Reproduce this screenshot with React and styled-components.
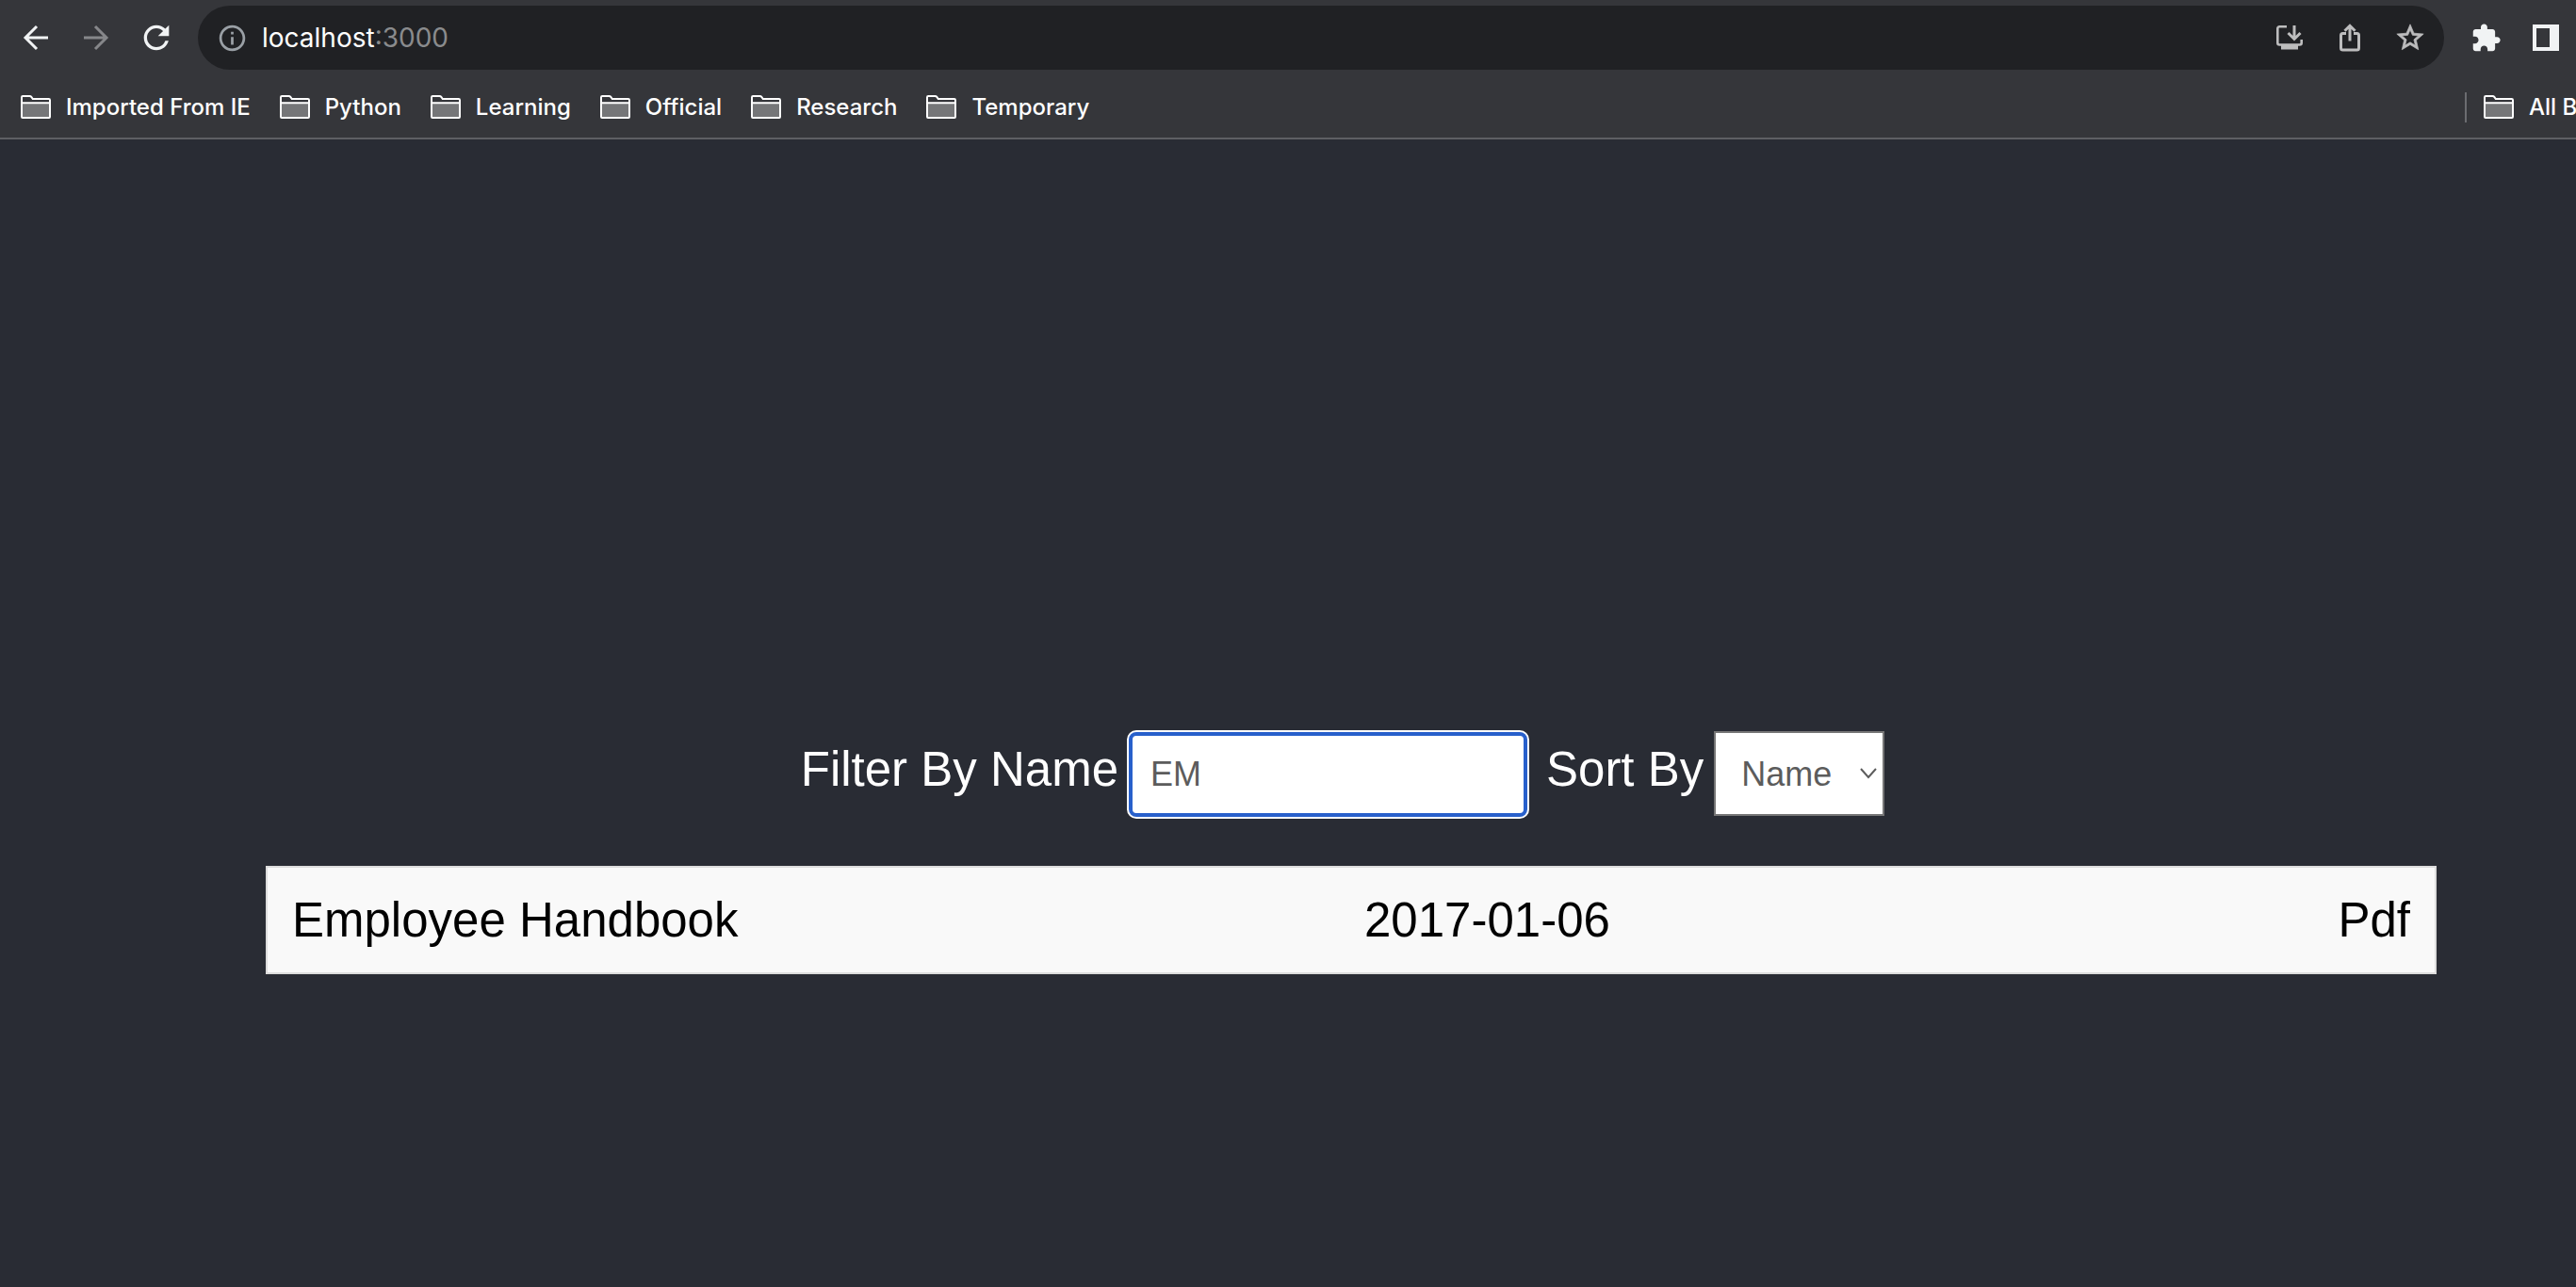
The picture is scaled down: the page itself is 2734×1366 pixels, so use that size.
import React, { useState } from "react";
import styled, { createGlobalStyle } from "styled-components";

const GlobalStyle = createGlobalStyle`
  *, *::before, *::after { box-sizing: border-box; }
  body {
    margin: 0;
    min-height: 100vh;
    background: #292c34;
    font-family: "Liberation Sans", Arial, sans-serif;
    overflow-x: hidden;
  }
`;

const Chrome = styled.header`
  background: #35363a;
  border-bottom: 2px solid #5e5f63;
  padding-top: 6px;
  font-family: Inter, "Noto Sans", sans-serif;
`;

const Toolbar = styled.div`
  display: flex;
  align-items: center;
  gap: 12px;
  padding-left: 6px;
`;

const IconGroup = styled.div`
  display: flex;
  flex: none;
`;

const IconButton = styled.button`
  display: flex;
  align-items: center;
  justify-content: center;
  width: 64px;
  height: 68px;
  padding: 0;
  border: 0;
  background: none;
  color: ${(p) => p.$color || "#f1f3f4"};
`;

const Icon = styled.svg`
  display: block;
  flex: none;
`;

const Omnibox = styled.div`
  display: flex;
  align-items: center;
  flex: 1;
  min-width: 0;
  height: 68px;
  padding: 0 4px 0 20px;
  border-radius: 34px;
  background: #202124;
  color: #9aa0a6;
`;

const Address = styled.label`
  display: flex;
  align-items: center;
  flex: 1;
  min-width: 0;
  margin-left: 15px;
  font-size: 28px;
  line-height: 34px;
  color: #8a8b8d;
`;

const AddressInput = styled.input`
  field-sizing: content;
  padding: 0;
  border: 0;
  outline: 0;
  background: none;
  color: #fff;
  font: inherit;
`;

const Bookmarks = styled.nav`
  display: flex;
  align-items: center;
  justify-content: space-between;
  height: 64px;
  margin-top: 8px;
  padding-left: 22px;
  overflow: hidden;
`;

const BookmarkList = styled.div`
  display: flex;
  gap: 31px;
`;

const Bookmark = styled.a`
  display: flex;
  align-items: center;
  gap: 16px;
  color: #fff;
  font-size: 24px;
  font-weight: 500;
  line-height: 32px;
  white-space: nowrap;
  text-decoration: none;
`;

const AllBookmarks = styled.div`
  flex: none;
  width: 118px;
  padding-left: 18px;
  border-left: 2px solid #6b6c70;
`;

const Page = styled.main`
  display: flex;
  flex-direction: column;
  gap: 52px;
  padding: 628px 148px 0 282px;
`;

const Filters = styled.form`
  display: flex;
  align-items: baseline;
  justify-content: center;
  gap: 20px;
  padding-right: 18px;
`;

const Field = styled.div`
  display: flex;
  align-items: baseline;
  gap: 11px;
`;

const FieldLabel = styled.label`
  color: #fff;
  font-size: 51px;
  line-height: 59px;
  white-space: nowrap;
`;

const TextInput = styled.input`
  width: 423px;
  height: 90px;
  padding: 0 19px;
  border: 4px solid #2860cb;
  border-radius: 8px;
  outline: 0;
  box-shadow: 0 0 0 2px #fff;
  background: #fff;
  color: #5c5c5c;
  font-family: inherit;
  font-size: 36px;
`;

const SelectBox = styled.div`
  position: relative;
`;

const Select = styled.select`
  appearance: none;
  width: 181px;
  height: 90px;
  padding: 0 27px;
  border: 2px solid #767676;
  border-radius: 0;
  background: #fff;
  color: #5c5c5c;
  font-family: inherit;
  font-size: 36px;
`;

const Chevron = styled(Icon)`
  position: absolute;
  right: 8px;
  top: 50%;
  transform: translateY(-50%);
  pointer-events: none;
`;

const Documents = styled.table`
  width: 100%;
  border: 2px solid #ddd;
  border-collapse: separate;
  border-spacing: 0;
  background: #f9f9f9;
  color: #000;
  font-size: 51px;
  line-height: 59px;
`;

const Cell = styled.td`
  width: ${(p) => p.$width || "auto"};
  padding: 26px ${(p) => (p.$align === "right" ? "26px" : "0")} 26px
    ${(p) => p.$indent || "0"};
  text-align: ${(p) => p.$align || "left"};
`;

const FolderIcon = () => (
  <Icon width="32" height="26" viewBox="0 0 32 26" fill="none" aria-hidden="true">
    <path d="M2 8h28v16H2z" fill="#757678" />
    <path
      d="M1 2.2Q1 1 2.2 1H9.5Q10.6 1 11.3 1.9L12.8 4H29.8Q31 4 31 5.2V23Q31 24 30 24H2Q1 24 1 23ZM1 8.3H31"
      stroke="#fff"
      strokeWidth="2"
    />
  </Icon>
);

const BackIcon = () => (
  <Icon width="28" height="28" viewBox="0 0 28 28" fill="none" stroke="currentColor" strokeWidth="3">
    <path d="M27 14H3M15 2L3 14l12 12" />
  </Icon>
);

const ForwardIcon = () => (
  <Icon width="28" height="28" viewBox="0 0 28 28" fill="none" stroke="currentColor" strokeWidth="3">
    <path d="M1 14h24M13 2l12 12-12 12" />
  </Icon>
);

const ReloadIcon = () => (
  <Icon width="40" height="40" viewBox="0 0 24 24" fill="currentColor">
    <path d="M17.65 6.35A7.958 7.958 0 0 0 12 4c-4.42 0-7.99 3.58-7.99 8s3.57 8 7.99 8c3.73 0 6.84-2.55 7.73-6h-2.08A5.99 5.99 0 0 1 12 18c-3.31 0-6-2.69-6-6s2.69-6 6-6c1.66 0 3.14.69 4.22 1.78L13 11h7V4l-2.35 2.35z" />
  </Icon>
);

const InfoIcon = () => (
  <Icon width="33" height="33" viewBox="0 0 24 24" fill="currentColor" aria-hidden="true">
    <path d="M11 7h2v2h-2zm0 4h2v6h-2zm1-9C6.48 2 2 6.48 2 12s4.48 10 10 10 10-4.48 10-10S17.52 2 12 2zm0 18c-4.41 0-8-3.59-8-8s3.59-8 8-8 8 3.59 8 8-3.59 8-8 8z" />
  </Icon>
);

const InstallIcon = () => (
  <Icon width="28" height="26" viewBox="0 0 28 26" fill="none" stroke="currentColor" strokeWidth="2.6">
    <path d="M11 1.3H3.3a2 2 0 0 0-2 2V18.5a2 2 0 0 0 2 2H24.7a2 2 0 0 0 2-2V15" />
    <path d="M19 0v14M12.5 8l6.5 6.5L25.5 8" strokeWidth="3" />
    <path d="M5 21h18v4.5H5z" fill="currentColor" stroke="none" />
  </Icon>
);

const ShareIcon = () => (
  <Icon width="22" height="30" viewBox="0 0 22 30" fill="none" stroke="currentColor" strokeWidth="3">
    <path d="M7 10.5H3.5a2 2 0 0 0-2 2V26a2 2 0 0 0 2 2H18.5a2 2 0 0 0 2-2V12.500a2 2 0 0 0-2-2H15" />
    <path d="M11 2.5V18.5M5.5 7.8L11 2.3l5.5 5.5" />
  </Icon>
);

const StarIcon = () => (
  <Icon width="34" height="34" viewBox="0 0 24 24" fill="currentColor" stroke="currentColor" strokeWidth="0.5">
    <path d="M22 9.24l-7.19-.62L12 2 9.19 8.63 2 9.24l5.46 4.73L5.82 21 12 17.27 18.18 21l-1.63-7.03L22 9.24zM12 15.4l-3.76 2.27 1-4.28-3.32-2.88 4.38-.38L12 6.1l1.71 4.04 4.38.38-3.32 2.88 1 4.28L12 15.4z" />
  </Icon>
);

const ExtensionIcon = () => (
  <Icon width="33" height="33" viewBox="0 0 24 24" fill="currentColor">
    <path d="M20.5 11H19V7c0-1.1-.9-2-2-2h-4V3.5C13 2.12 11.88 1 10.5 1S8 2.12 8 3.5V5H4c-1.1 0-1.99.9-1.99 2v3.8H3.5c1.49 0 2.7 1.21 2.7 2.7s-1.21 2.7-2.7 2.7H2V20c0 1.1.9 2 2 2h3.8v-1.5c0-1.49 1.21-2.7 2.7-2.7 1.49 0 2.7 1.21 2.7 2.7V22H17c1.1 0 2-.9 2-2v-4h1.5c1.38 0 2.5-1.12 2.5-2.5S21.88 11 20.5 11z" />
  </Icon>
);

const PanelIcon = () => (
  <Icon width="28" height="28" viewBox="0 0 28 28" fill="currentColor">
    <path fillRule="evenodd" d="M0 0h28v28H0zM4 4v20h14V4z" />
  </Icon>
);

const folders = ["Imported From IE", "Python", "Learning", "Official", "Research", "Temporary"];

const documents = [{ name: "Employee Handbook", added: "2017-01-06", type: "Pdf" }];

function BrowserChrome() {
  return (
    <Chrome>
      <Toolbar>
        <IconGroup>
          <IconButton aria-label="Back"><BackIcon /></IconButton>
          <IconButton aria-label="Forward" $color="#86878a"><ForwardIcon /></IconButton>
          <IconButton aria-label="Reload"><ReloadIcon /></IconButton>
        </IconGroup>
        <Omnibox>
          <InfoIcon />
          <Address>
            <AddressInput aria-label="Address" defaultValue="localhost" />
            <span>:3000</span>
          </Address>
          <IconGroup>
            <IconButton aria-label="Install" $color="#bdbdbe"><InstallIcon /></IconButton>
            <IconButton aria-label="Share" $color="#bdbdbe"><ShareIcon /></IconButton>
            <IconButton aria-label="Bookmark" $color="#bdbdbe"><StarIcon /></IconButton>
          </IconGroup>
        </Omnibox>
        <IconGroup>
          <IconButton aria-label="Extensions"><ExtensionIcon /></IconButton>
          <IconButton aria-label="Side panel"><PanelIcon /></IconButton>
        </IconGroup>
      </Toolbar>
      <Bookmarks>
        <BookmarkList>
          {folders.map((name) => (
            <Bookmark key={name} href="#">
              <FolderIcon />
              {name}
            </Bookmark>
          ))}
        </BookmarkList>
        <AllBookmarks>
          <Bookmark href="#">
            <FolderIcon />
            All B
          </Bookmark>
        </AllBookmarks>
      </Bookmarks>
    </Chrome>
  );
}

export default function App() {
  const [query, setQuery] = useState("EM");
  const [sortBy, setSortBy] = useState("name");
  const rows = documents
    .filter((doc) => doc.name.toLowerCase().includes(query.toLowerCase()))
    .sort((a, b) => a[sortBy].localeCompare(b[sortBy]));

  return (
    <>
      <GlobalStyle />
      <BrowserChrome />
      <Page>
        <Filters onSubmit={(e) => e.preventDefault()}>
          <Field>
            <FieldLabel htmlFor="filter">Filter By Name</FieldLabel>
            <TextInput id="filter" type="text" value={query} onChange={(e) => setQuery(e.target.value)} />
          </Field>
          <Field>
            <FieldLabel htmlFor="sort">Sort By</FieldLabel>
            <SelectBox>
              <Select id="sort" value={sortBy} onChange={(e) => setSortBy(e.target.value)}>
                <option value="name">Name</option>
                <option value="added">Date</option>
              </Select>
              <Chevron width="18" height="12" viewBox="0 0 18 12" fill="none" stroke="#5c5c5c" strokeWidth="2">
                <path d="M1 1l8 9 8-9" />
              </Chevron>
            </SelectBox>
          </Field>
        </Filters>
        <Documents>
          <tbody>
            {rows.map((doc) => (
              <tr key={doc.name}>
                <Cell $width="50%" $indent="26px">{doc.name}</Cell>
                <Cell $indent="14px">{doc.added}</Cell>
                <Cell $align="right">{doc.type}</Cell>
              </tr>
            ))}
          </tbody>
        </Documents>
      </Page>
    </>
  );
}
